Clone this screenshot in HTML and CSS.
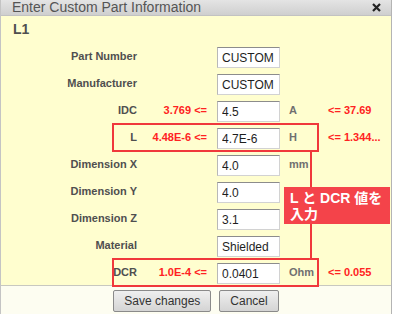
FILE: index.html
```html
<!DOCTYPE html>
<html lang="ja">
<head>
	<meta charset="UTF-8">
	<title>Enter Custom Part Information</title>
	<link rel="stylesheet" href="styles.css">
</head>
<body>
	<div class="dialog">
		<div class="titlebar">
			<span class="title">Enter Custom Part Information</span>
			<svg class="close" width="9" height="9" viewBox="0 0 9 9"><path d="M1 1L8 8M8 1L1 8" stroke="#222" stroke-width="2.2"/></svg>
		</div>
		<div class="content">
			<div class="heading">L1</div>
			<div class="form">
				<div class="row">
					<span class="label">Part Number</span><span class="min"></span>
					<span class="field"><input type="text" value="CUSTOM"></span><span class="unit"></span><span class="max"></span>
				</div>
				<div class="row">
					<span class="label">Manufacturer</span><span class="min"></span>
					<span class="field"><input type="text" value="CUSTOM"></span><span class="unit"></span><span class="max"></span>
				</div>
				<div class="row">
					<span class="label">IDC</span><span class="min">3.769 &lt;=</span>
					<span class="field"><input type="text" value="4.5"></span><span class="unit">A</span><span class="max">&lt;= 37.69</span>
				</div>
				<div class="row">
					<span class="label">L</span><span class="min">4.48E-6 &lt;=</span>
					<span class="field"><input type="text" value="4.7E-6"></span><span class="unit">H</span><span class="max">&lt;= 1.344...</span>
				</div>
				<div class="row">
					<span class="label">Dimension X</span><span class="min"></span>
					<span class="field"><input type="text" value="4.0"></span><span class="unit">mm</span><span class="max"></span>
				</div>
				<div class="row">
					<span class="label">Dimension Y</span><span class="min"></span>
					<span class="field"><input type="text" value="4.0"></span><span class="unit"></span><span class="max"></span>
				</div>
				<div class="row">
					<span class="label">Dimension Z</span><span class="min"></span>
					<span class="field"><input type="text" value="3.1"></span><span class="unit"></span><span class="max"></span>
				</div>
				<div class="row">
					<span class="label">Material</span><span class="min"></span>
					<span class="field"><input type="text" value="Shielded"></span><span class="unit"></span><span class="max"></span>
				</div>
				<div class="row">
					<span class="label">DCR</span><span class="min">1.0E-4 &lt;=</span>
					<span class="field"><input type="text" value="0.0401"></span><span class="unit">Ohm</span><span class="max">&lt;= 0.055</span>
				</div>
			</div>

			<!-- annotation overlay -->
			<div class="mark mark-l"></div>
			<div class="mark mark-dcr"></div>
			<div class="connector"></div>
			<div class="callout">L と DCR 値を<br>入力</div>
		</div>
		<div class="buttons">
			<button type="button">Save changes</button>
			<button type="button">Cancel</button>
		</div>
	</div>
</body>
</html>
```

FILE: styles.css
```css
*{
	margin: 0;
	box-sizing: border-box;
}
body{
	font-family: "Liberation Sans", Arial, sans-serif;
	background: #fff;
	overflow: hidden;
}
.dialog{
	width: 392px;
	border-left: 1px solid #c4c4c4;
	border-right: 1px solid #b4b4b4;
}
.titlebar{
	height: 16px;
	display: flex;
	align-items: center;
	justify-content: space-between;
	padding: 0 10px 0 11px;
	background: linear-gradient(#e4e4e4, #cfcfcf);
	border-bottom: 1px solid #c2c2c2;
}
.title{
	font-size: 14px;
	line-height: 16px;
	color: #555;
	margin-top: -2px;
}
.close{
	display: block;
	margin-top: -1px;
}
.content{
	position: relative;
	height: 270px;
	padding-top: 5px;
	background: #fffecf;
	border-bottom: 1px solid #c8c8c0;
}
.heading{
	font-size: 14px;
	line-height: 16px;
	font-weight: bold;
	color: #4f4f4f;
	padding-left: 12px;
}
.form{
	margin-top: 7px;
}
.row{
	display: grid;
	grid-template-columns: 136px 80px 71px 38px 1fr;
	height: 27px;
	align-items: center;
	font-size: 11px;
	font-weight: bold;
}
.label{
	text-align: right;
	color: #4f4f4f;
	margin-top: -3px;
}
.min{
	text-align: right;
	padding-right: 10px;
	color: #f22;
	margin-top: -3px;
}
.field input{
	display: block;
	width: 63px;
	height: 21px;
	padding: 1px 4px 0;
	border: 1px solid #d2d2d2;
	border-top-color: #8c8c8c;
	border-left-color: #b8b8b8;
	background: #fff;
	font-family: "Liberation Sans", Arial, sans-serif;
	font-size: 12px;
	color: #1e1e1e;
}
.unit{
	padding-left: 1px;
	color: #707070;
	margin-top: -3px;
}
.max{
	padding-left: 2px;
	color: #f22;
	margin-top: -3px;
}

/* red notes drawn over the form */
.mark{
	position: absolute;
	left: 111px;
	width: 207px;
	height: 29px;
	border: 2px solid #f0383c;
}
.mark-l{
	top: 107px;
}
.mark-dcr{
	top: 242px;
}
.connector{
	position: absolute;
	left: 309px;
	top: 136px;
	width: 2px;
	height: 107px;
	background: #f0383c;
}
.callout{
	position: absolute;
	left: 283px;
	top: 171px;
	width: 106px;
	height: 37px;
	padding: 3px 6px 0;
	background: #f4434a;
	color: #fff;
	font-family: "Liberation Sans", "Noto Sans CJK JP", sans-serif;
	font-size: 14px;
	font-weight: bold;
	line-height: 16px;
	white-space: nowrap;
}
.buttons{
	display: flex;
	justify-content: center;
	gap: 8px;
	height: 28px;
	padding-top: 4px;
	background: #fdfdf1;
}
button{
	height: 22px;
	padding: 0 10px;
	border: 1px solid #8a8a8a;
	border-radius: 2px;
	background: linear-gradient(#efefef, #d4d4d4);
	font-family: "Liberation Sans", Arial, sans-serif;
	font-size: 12px;
	color: #333;
}
```
